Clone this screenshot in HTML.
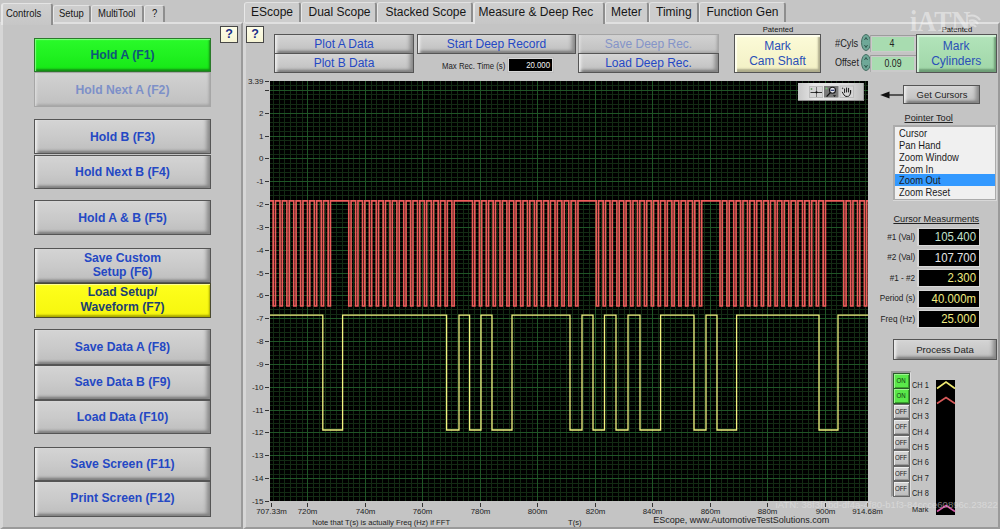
<!DOCTYPE html>
<html><head><meta charset="utf-8"><style>
html,body{margin:0;padding:0;}
body{width:1000px;height:529px;overflow:hidden;position:relative;background:#c5c5c5;font-family:"Liberation Sans",sans-serif;}
.a{position:absolute;box-sizing:border-box;}
.t{position:absolute;white-space:nowrap;}
.tab{position:absolute;box-sizing:border-box;background:#cfcfcf;border-left:1px solid #e8e8e8;border-top:1px solid #e2e2e2;border-right:2px solid #8e8e8e;border-radius:3px 3px 0 0;}
.panel{position:absolute;box-sizing:border-box;background:#c4c4c4;border-top:2px solid #e0e0e0;border-left:3px solid #d6d6d6;border-right:2px solid #9a9a9a;border-bottom:2px solid #9a9a9a;}
.help{position:absolute;box-sizing:border-box;background:linear-gradient(#fdfde8,#f6f4d4);border:1.5px solid #474747;}
.btn{position:absolute;box-sizing:border-box;border:1px solid #555;background:linear-gradient(#d4d4d4,#c9c9c9 55%,#bdbdbd);box-shadow:inset 4px 0 3px -2px #eeeeee,inset -5px 0 4px -2px #848484,inset 0 -4px 3px -2px #747474,inset 0 2px 2px -1px #e4e4e4;}
.mf{position:absolute;box-sizing:border-box;background:#000;border:1px solid #555;outline:2px solid #d4d4d4;}
.tg{position:absolute;box-sizing:border-box;border:1px solid #444;}
.on{background:#5ae84a;border-color:#2a5a2a;box-shadow:inset 1px 1px 0 #9cf58e,inset -1px -1px 0 #3aa02c;}
.off{background:linear-gradient(#d6d6d6,#bcbcbc);border-color:#666;box-shadow:inset 1px 1px 0 #eee,inset -1px -1px 0 #999;}

</style></head><body>
<div class="panel" style="left:0px;top:22px;width:243px;height:507px;"></div><div class="tab" style="left:1px;top:3px;width:52px;height:21.5px;z-index:1;border-left:2px solid #e6e6e6;border-top:1px solid #e4e4e4;background:linear-gradient(#d0d0d0,#c6c6c6);"></div><div class="t" style="top:7.12px;font-size:11px;line-height:13.75px;color:#161616;left:6.00px;transform:scaleX(0.86);transform-origin:0 50%;z-index:2;">Controls</div><div class="tab" style="left:53px;top:4.8px;width:38px;height:17.5px;background:#cdcdcd;"></div><div class="t" style="top:7.12px;font-size:11px;line-height:13.75px;color:#161616;left:58.50px;transform:scaleX(0.86);transform-origin:0 50%;z-index:2;">Setup</div><div class="tab" style="left:91px;top:4.8px;width:53px;height:17.5px;background:#cdcdcd;"></div><div class="t" style="top:7.12px;font-size:11px;line-height:13.75px;color:#161616;left:97.50px;transform:scaleX(0.86);transform-origin:0 50%;z-index:2;">MultiTool</div><div class="tab" style="left:144px;top:4.8px;width:21px;height:17.5px;background:#cdcdcd;"></div><div class="t" style="top:7.12px;font-size:11px;line-height:13.75px;color:#161616;left:151.50px;transform:scaleX(0.86);transform-origin:0 50%;z-index:2;">?</div><div class="help" style="left:220.3px;top:26.3px;width:17.3px;height:16.5px;"></div><div class="t" style="top:26.52px;font-size:12.5px;line-height:15.62px;color:#1a2f88;font-weight:700;left:-70.90px;width:600px;text-align:center;">?</div><div class="btn" style="left:34px;top:37.7px;width:177px;height:34.6px;background:linear-gradient(#2afa2a,#16e816);box-shadow:inset 1px 1px 1px #80ff80,inset -1px -2px 2px #139013;border-color:#2a7a2a;"></div><div class="t" style="top:48.09px;font-size:12.2px;line-height:15.25px;color:#0e5878;font-weight:700;left:-177.50px;width:600px;text-align:center;">Hold A (F1)</div><div class="btn" style="left:34px;top:72.2px;width:177px;height:34.9px;border-color:#a6a6a6;background:linear-gradient(#d2d2d2,#c8c8c8 55%,#c0c0c0);box-shadow:inset 3px 0 3px -2px #e4e4e4,inset -3px 0 3px -2px #a0a0a0,inset 0 -3px 3px -2px #9a9a9a;"></div><div class="t" style="top:82.59px;font-size:12.2px;line-height:15.25px;color:#7d90c8;font-weight:700;left:-177.50px;width:600px;text-align:center;">Hold Next A (F2)</div><div class="btn" style="left:34px;top:119.3px;width:177px;height:35.2px;"></div><div class="t" style="top:129.69px;font-size:12.2px;line-height:15.25px;color:#2448c4;font-weight:700;left:-177.50px;width:600px;text-align:center;">Hold B (F3)</div><div class="btn" style="left:34px;top:154.5px;width:177px;height:34.8px;"></div><div class="t" style="top:164.89px;font-size:12.2px;line-height:15.25px;color:#2448c4;font-weight:700;left:-177.50px;width:600px;text-align:center;">Hold Next B (F4)</div><div class="btn" style="left:34px;top:200.4px;width:177px;height:35.1px;"></div><div class="t" style="top:210.79px;font-size:12.2px;line-height:15.25px;color:#2448c4;font-weight:700;left:-177.50px;width:600px;text-align:center;">Hold A &amp; B (F5)</div><div class="btn" style="left:34px;top:247.7px;width:177px;height:35px;"></div><div class="t" style="top:250.59px;font-size:12.2px;line-height:15.25px;color:#2448c4;font-weight:700;left:-177.50px;width:600px;text-align:center;">Save Custom</div><div class="t" style="top:265.09px;font-size:12.2px;line-height:15.25px;color:#2448c4;font-weight:700;left:-177.50px;width:600px;text-align:center;">Setup (F6)</div><div class="btn" style="left:34px;top:282.6px;width:177px;height:35.4px;background:linear-gradient(#feff1c,#f6f60e);box-shadow:inset 1px 1px 1px #ffffa0,inset -1px -2px 2px #a8a800;border-color:#4a4a30;"></div><div class="t" style="top:285.49px;font-size:12.2px;line-height:15.25px;color:#1c3f72;font-weight:700;left:-177.50px;width:600px;text-align:center;">Load Setup/</div><div class="t" style="top:299.99px;font-size:12.2px;line-height:15.25px;color:#1c3f72;font-weight:700;left:-177.50px;width:600px;text-align:center;">Waveform (F7)</div><div class="btn" style="left:34px;top:329.4px;width:177px;height:35.2px;"></div><div class="t" style="top:339.79px;font-size:12.2px;line-height:15.25px;color:#2448c4;font-weight:700;left:-177.50px;width:600px;text-align:center;">Save Data A (F8)</div><div class="btn" style="left:34px;top:364.6px;width:177px;height:35.1px;"></div><div class="t" style="top:374.99px;font-size:12.2px;line-height:15.25px;color:#2448c4;font-weight:700;left:-177.50px;width:600px;text-align:center;">Save Data B (F9)</div><div class="btn" style="left:34px;top:399.7px;width:177px;height:34.3px;"></div><div class="t" style="top:410.09px;font-size:12.2px;line-height:15.25px;color:#2448c4;font-weight:700;left:-177.50px;width:600px;text-align:center;">Load Data (F10)</div><div class="btn" style="left:34px;top:446.6px;width:177px;height:34.5px;"></div><div class="t" style="top:456.99px;font-size:12.2px;line-height:15.25px;color:#2448c4;font-weight:700;left:-177.50px;width:600px;text-align:center;">Save Screen (F11)</div><div class="btn" style="left:34px;top:481.1px;width:177px;height:35.7px;"></div><div class="t" style="top:491.49px;font-size:12.2px;line-height:15.25px;color:#2448c4;font-weight:700;left:-177.50px;width:600px;text-align:center;">Print Screen (F12)</div><div class="panel" style="left:243px;top:22px;width:757px;height:507px;"></div><div class="tab" style="left:244px;top:2.4px;width:57px;height:19.900000000000002px;background:#cdcdcd;"></div><div class="t" style="top:4.82px;font-size:12px;line-height:15.0px;color:#161616;left:251.00px;z-index:2;">EScope</div><div class="tab" style="left:301px;top:2.4px;width:76px;height:19.900000000000002px;background:#cdcdcd;"></div><div class="t" style="top:4.82px;font-size:12px;line-height:15.0px;color:#161616;left:308.50px;z-index:2;">Dual Scope</div><div class="tab" style="left:377px;top:2.4px;width:96px;height:19.900000000000002px;background:#cdcdcd;"></div><div class="t" style="top:4.82px;font-size:12px;line-height:15.0px;color:#161616;left:385.50px;z-index:2;">Stacked Scope</div><div class="tab" style="left:473px;top:1.8px;width:132px;height:22.7px;z-index:1;border-left:2px solid #e6e6e6;border-top:1px solid #e4e4e4;background:linear-gradient(#d0d0d0,#c6c6c6);"></div><div class="t" style="top:4.82px;font-size:12px;line-height:15.0px;color:#161616;left:478.50px;z-index:2;">Measure &amp; Deep Rec</div><div class="tab" style="left:605px;top:2.4px;width:44px;height:19.900000000000002px;background:#cdcdcd;"></div><div class="t" style="top:4.82px;font-size:12px;line-height:15.0px;color:#161616;left:611.00px;z-index:2;">Meter</div><div class="tab" style="left:649px;top:2.4px;width:50px;height:19.900000000000002px;background:#cdcdcd;"></div><div class="t" style="top:4.82px;font-size:12px;line-height:15.0px;color:#161616;left:656.00px;z-index:2;">Timing</div><div class="tab" style="left:699px;top:2.4px;width:87px;height:19.900000000000002px;background:#cdcdcd;"></div><div class="t" style="top:4.82px;font-size:12px;line-height:15.0px;color:#161616;left:706.50px;z-index:2;">Function Gen</div><div class="help" style="left:246.3px;top:26.3px;width:17.3px;height:16.5px;"></div><div class="t" style="top:26.52px;font-size:12.5px;line-height:15.62px;color:#1a2f88;font-weight:700;left:-44.90px;width:600px;text-align:center;">?</div><div class="btn" style="left:274px;top:34px;width:140px;height:20px;"></div><div class="t" style="top:37.12px;font-size:12px;line-height:15.0px;color:#2448c4;left:44.00px;width:600px;text-align:center;">Plot A Data</div><div class="btn" style="left:274px;top:53px;width:140px;height:20px;"></div><div class="t" style="top:56.12px;font-size:12px;line-height:15.0px;color:#2448c4;left:44.00px;width:600px;text-align:center;">Plot B Data</div><div class="btn" style="left:417px;top:34px;width:159px;height:20px;"></div><div class="t" style="top:37.12px;font-size:12px;line-height:15.0px;color:#2448c4;left:196.50px;width:600px;text-align:center;">Start Deep Record</div><div class="t" style="top:60.66px;font-size:8.3px;line-height:10.38px;color:#222;left:442.00px;transform:scaleX(0.94);transform-origin:0 50%;">Max Rec. Time (s)</div><div class="a" style="left:507px;top:57px;width:47px;height:16px;background:#d8d8d8;border:1px solid #bdbdbd;"></div><div class="a" style="left:509px;top:59px;width:43px;height:12px;background:#000;"></div><div class="t" style="top:60.36px;font-size:8.3px;line-height:10.38px;color:#f4f4f4;left:-50.00px;width:600px;text-align:right;transform:scaleX(0.94);transform-origin:100% 50%;">20.000</div><div class="btn" style="left:578px;top:34px;width:141px;height:20px;border-color:#a6a6a6;background:linear-gradient(#d2d2d2,#c8c8c8 55%,#c0c0c0);box-shadow:inset 3px 0 3px -2px #e4e4e4,inset -3px 0 3px -2px #a0a0a0,inset 0 -3px 3px -2px #9a9a9a;"></div><div class="t" style="top:37.12px;font-size:12px;line-height:15.0px;color:#8494c8;left:348.50px;width:600px;text-align:center;">Save Deep Rec.</div><div class="btn" style="left:578px;top:53px;width:141px;height:20px;"></div><div class="t" style="top:56.12px;font-size:12px;line-height:15.0px;color:#2448c4;left:348.50px;width:600px;text-align:center;">Load Deep Rec.</div><div class="t" style="top:25.14px;font-size:8px;line-height:10.0px;color:#151515;left:477.50px;width:600px;text-align:center;transform:scaleX(0.95);transform-origin:50% 50%;">Patented</div><div class="btn" style="left:734px;top:34px;width:87px;height:39px;background:linear-gradient(#fcfbd8,#f2f0c4);box-shadow:inset 2px 2px 1px #ffffee,inset -2px -3px 2px #aeac8c;"></div><div class="t" style="top:38.52px;font-size:12px;line-height:15.0px;color:#2a50b8;left:477.50px;width:600px;text-align:center;">Mark</div><div class="t" style="top:53.92px;font-size:12px;line-height:15.0px;color:#2a50b8;left:477.50px;width:600px;text-align:center;">Cam Shaft</div><div class="t" style="top:37.51px;font-size:10.2px;line-height:12.75px;color:#222;left:835.00px;transform:scaleX(0.91);transform-origin:0 50%;">#Cyls</div><div class="t" style="top:57.21px;font-size:10.2px;line-height:12.75px;color:#222;left:835.00px;transform:scaleX(0.885);transform-origin:0 50%;">Offset</div><svg class="a" style="left:861px;top:34px" width="10" height="17"><ellipse cx="5" cy="8.5" rx="4.5" ry="8" fill="#6fa898" stroke="#456e62" stroke-width="1"/><path d="M3.5 6L5 3.5L6.5 6M3.5 11L5 13.5L6.5 11" stroke="#2a4a42" stroke-width="0.9" fill="none"/></svg><svg class="a" style="left:861px;top:54px" width="10" height="17"><ellipse cx="5" cy="8.5" rx="4.5" ry="8" fill="#6fa898" stroke="#456e62" stroke-width="1"/><path d="M3.5 6L5 3.5L6.5 6M3.5 11L5 13.5L6.5 11" stroke="#2a4a42" stroke-width="0.9" fill="none"/></svg><div class="a" style="left:870px;top:35px;width:46px;height:17px;background:#cacaca;border-top:1px solid #9c9c9c;border-left:1px solid #aaa;"></div><div class="a" style="left:872px;top:37px;width:42px;height:13.5px;background:#a8dcb0;"></div><div class="t" style="top:37.61px;font-size:10.2px;line-height:12.75px;color:#222;left:592.20px;width:600px;text-align:center;transform:scaleX(0.86);transform-origin:50% 50%;">4</div><div class="a" style="left:870px;top:55px;width:46px;height:17px;background:#cacaca;border-top:1px solid #9c9c9c;border-left:1px solid #aaa;"></div><div class="a" style="left:872px;top:56.5px;width:42px;height:13.5px;background:#a8dcb0;"></div><div class="t" style="top:58.21px;font-size:10.2px;line-height:12.75px;color:#222;left:592.50px;width:600px;text-align:center;transform:scaleX(0.86);transform-origin:50% 50%;">0.09</div><div class="t" style="top:24.94px;font-size:8px;line-height:10.0px;color:#151515;left:656.70px;width:600px;text-align:center;transform:scaleX(0.95);transform-origin:50% 50%;">Patented</div><div class="btn" style="left:916px;top:34px;width:80.5px;height:39px;background:linear-gradient(#b2e4ba,#a0d6a8);box-shadow:inset 2px 2px 1px #d2f2d8,inset -2px -3px 2px #6e9e76;"></div><div class="t" style="top:38.52px;font-size:12px;line-height:15.0px;color:#2a50b8;left:656.20px;width:600px;text-align:center;">Mark</div><div class="t" style="top:53.92px;font-size:12px;line-height:15.0px;color:#2a50b8;left:656.20px;width:600px;text-align:center;">Cylinders</div><svg width="598" height="420" viewBox="270.0 81.0 598.0 420.0" style="position:absolute;left:270px;top:81px;display:block"><rect x="270.0" y="81.0" width="598.0" height="420.0" fill="#000"/><path d="M273.5 81.0V501.0M279.5 81.0V501.0M284.5 81.0V501.0M290.5 81.0V501.0M296.5 81.0V501.0M302.5 81.0V501.0M313.5 81.0V501.0M319.5 81.0V501.0M325.5 81.0V501.0M330.5 81.0V501.0M336.5 81.0V501.0M342.5 81.0V501.0M348.5 81.0V501.0M353.5 81.0V501.0M359.5 81.0V501.0M371.5 81.0V501.0M376.5 81.0V501.0M382.5 81.0V501.0M388.5 81.0V501.0M394.5 81.0V501.0M399.5 81.0V501.0M405.5 81.0V501.0M411.5 81.0V501.0M417.5 81.0V501.0M428.5 81.0V501.0M434.5 81.0V501.0M440.5 81.0V501.0M445.5 81.0V501.0M451.5 81.0V501.0M457.5 81.0V501.0M463.5 81.0V501.0M468.5 81.0V501.0M474.5 81.0V501.0M486.5 81.0V501.0M491.5 81.0V501.0M497.5 81.0V501.0M503.5 81.0V501.0M509.5 81.0V501.0M514.5 81.0V501.0M520.5 81.0V501.0M526.5 81.0V501.0M532.5 81.0V501.0M543.5 81.0V501.0M549.5 81.0V501.0M555.5 81.0V501.0M560.5 81.0V501.0M566.5 81.0V501.0M572.5 81.0V501.0M578.5 81.0V501.0M583.5 81.0V501.0M589.5 81.0V501.0M601.5 81.0V501.0M606.5 81.0V501.0M612.5 81.0V501.0M618.5 81.0V501.0M624.5 81.0V501.0M629.5 81.0V501.0M635.5 81.0V501.0M641.5 81.0V501.0M647.5 81.0V501.0M658.5 81.0V501.0M664.5 81.0V501.0M670.5 81.0V501.0M675.5 81.0V501.0M681.5 81.0V501.0M687.5 81.0V501.0M693.5 81.0V501.0M698.5 81.0V501.0M704.5 81.0V501.0M716.5 81.0V501.0M721.5 81.0V501.0M727.5 81.0V501.0M733.5 81.0V501.0M739.5 81.0V501.0M744.5 81.0V501.0M750.5 81.0V501.0M756.5 81.0V501.0M762.5 81.0V501.0M773.5 81.0V501.0M779.5 81.0V501.0M785.5 81.0V501.0M790.5 81.0V501.0M796.5 81.0V501.0M802.5 81.0V501.0M808.5 81.0V501.0M813.5 81.0V501.0M819.5 81.0V501.0M831.5 81.0V501.0M836.5 81.0V501.0M842.5 81.0V501.0M848.5 81.0V501.0M854.5 81.0V501.0M859.5 81.0V501.0M865.5 81.0V501.0M270.0 496.5H868.0M270.0 492.5H868.0M270.0 487.5H868.0M270.0 483.5H868.0M270.0 474.5H868.0M270.0 469.5H868.0M270.0 464.5H868.0M270.0 460.5H868.0M270.0 451.5H868.0M270.0 446.5H868.0M270.0 442.5H868.0M270.0 437.5H868.0M270.0 428.5H868.0M270.0 423.5H868.0M270.0 419.5H868.0M270.0 414.5H868.0M270.0 405.5H868.0M270.0 401.5H868.0M270.0 396.5H868.0M270.0 391.5H868.0M270.0 382.5H868.0M270.0 378.5H868.0M270.0 373.5H868.0M270.0 369.5H868.0M270.0 359.5H868.0M270.0 355.5H868.0M270.0 350.5H868.0M270.0 346.5H868.0M270.0 337.5H868.0M270.0 332.5H868.0M270.0 327.5H868.0M270.0 323.5H868.0M270.0 314.5H868.0M270.0 309.5H868.0M270.0 305.5H868.0M270.0 300.5H868.0M270.0 291.5H868.0M270.0 286.5H868.0M270.0 282.5H868.0M270.0 277.5H868.0M270.0 268.5H868.0M270.0 263.5H868.0M270.0 259.5H868.0M270.0 254.5H868.0M270.0 245.5H868.0M270.0 241.5H868.0M270.0 236.5H868.0M270.0 232.5H868.0M270.0 222.5H868.0M270.0 218.5H868.0M270.0 213.5H868.0M270.0 209.5H868.0M270.0 200.5H868.0M270.0 195.5H868.0M270.0 190.5H868.0M270.0 186.5H868.0M270.0 177.5H868.0M270.0 172.5H868.0M270.0 168.5H868.0M270.0 163.5H868.0M270.0 154.5H868.0M270.0 149.5H868.0M270.0 145.5H868.0M270.0 140.5H868.0M270.0 131.5H868.0M270.0 126.5H868.0M270.0 122.5H868.0M270.0 117.5H868.0M270.0 108.5H868.0M270.0 104.5H868.0M270.0 99.5H868.0M270.0 94.5H868.0M270.0 85.5H868.0" stroke="#132b14" stroke-width="1" fill="none"/><path d="M307.5 81.0V501.0M365.5 81.0V501.0M422.5 81.0V501.0M480.5 81.0V501.0M537.5 81.0V501.0M595.5 81.0V501.0M652.5 81.0V501.0M710.5 81.0V501.0M767.5 81.0V501.0M825.5 81.0V501.0M270.0 501.5H868.0M270.0 478.5H868.0M270.0 455.5H868.0M270.0 432.5H868.0M270.0 410.5H868.0M270.0 387.5H868.0M270.0 364.5H868.0M270.0 341.5H868.0M270.0 318.5H868.0M270.0 295.5H868.0M270.0 273.5H868.0M270.0 250.5H868.0M270.0 227.5H868.0M270.0 204.5H868.0M270.0 181.5H868.0M270.0 158.5H868.0M270.0 136.5H868.0M270.0 113.5H868.0M270.0 90.5H868.0" stroke="#1f5526" stroke-width="1" fill="none"/><path d="M270.0 200.9H273.15V306.0H275.45V200.9H280.03V306.0H282.32V200.9H286.90V306.0H289.20V200.9H293.78V306.0H296.07V200.9H300.65V306.0H302.95V200.9H307.53V306.0H309.82V200.9H314.40V306.0H316.70V200.9H321.28V306.0H323.57V200.9H328.15V306.0H330.45V200.9H348.78V306.0H351.07V200.9H355.65V306.0H357.95V200.9H362.53V306.0H364.82V200.9H369.40V306.0H371.70V200.9H376.28V306.0H378.57V200.9H383.15V306.0H385.45V200.9H390.03V306.0H392.32V200.9H396.90V306.0H399.20V200.9H403.78V306.0H406.07V200.9H410.65V306.0H412.95V200.9H417.53V306.0H419.82V200.9H424.40V306.0H426.70V200.9H431.28V306.0H433.57V200.9H438.15V306.0H440.45V200.9H445.03V306.0H447.32V200.9H451.90V306.0H454.20V200.9H472.53V306.0H474.82V200.9H479.40V306.0H481.70V200.9H486.28V306.0H488.57V200.9H493.15V306.0H495.45V200.9H500.03V306.0H502.32V200.9H506.90V306.0H509.20V200.9H513.77V306.0H516.07V200.9H520.65V306.0H522.95V200.9H527.52V306.0H529.82V200.9H534.40V306.0H536.70V200.9H541.27V306.0H543.57V200.9H548.15V306.0H550.45V200.9H555.02V306.0H557.32V200.9H561.90V306.0H564.20V200.9H568.77V306.0H571.07V200.9H575.65V306.0H577.95V200.9H596.27V306.0H598.57V200.9H603.15V306.0H605.45V200.9H610.02V306.0H612.32V200.9H616.90V306.0H619.20V200.9H623.77V306.0H626.07V200.9H630.65V306.0H632.95V200.9H637.52V306.0H639.82V200.9H644.40V306.0H646.70V200.9H651.27V306.0H653.57V200.9H658.15V306.0H660.45V200.9H665.02V306.0H667.32V200.9H671.90V306.0H674.20V200.9H678.77V306.0H681.07V200.9H685.65V306.0H687.95V200.9H692.52V306.0H694.82V200.9H699.40V306.0H701.70V200.9H720.02V306.0H722.32V200.9H726.90V306.0H729.20V200.9H733.77V306.0H736.07V200.9H740.65V306.0H742.95V200.9H747.52V306.0H749.82V200.9H754.40V306.0H756.70V200.9H761.27V306.0H763.57V200.9H768.15V306.0H770.45V200.9H775.02V306.0H777.32V200.9H781.90V306.0H784.20V200.9H788.77V306.0H791.07V200.9H795.65V306.0H797.95V200.9H802.52V306.0H804.82V200.9H809.40V306.0H811.70V200.9H816.27V306.0H818.57V200.9H823.15V306.0H825.45V200.9H843.77V306.0H846.07V200.9H850.65V306.0H852.95V200.9H857.52V306.0H859.82V200.9H864.40V306.0H866.70V200.9H868.0" stroke="#ec5c5a" stroke-width="1.65" fill="none"/><path d="M270.0 315.1H322.8V430.0H342.6V315.1H446.6V430.0H459V315.1H469.6V430.0H481V315.1H492V430.0H512V315.1H570V430.0H582V315.1H593V430.0H604.5V315.1H616V430.0H628V315.1H640V430.0H660.6V315.1H694V430.0H706V315.1H717V430.0H736.6V315.1H819V430.0H838V315.1H868.0" stroke="#f2f280" stroke-width="1.3" fill="none"/></svg><div class="a" style="left:265px;top:90px;width:4px;height:1px;background:#333"></div><div class="a" style="left:265px;top:113px;width:4px;height:1px;background:#333"></div><div class="t" style="top:109.44px;font-size:8px;line-height:10px;color:#222;left:163.50px;width:100px;text-align:right;">2</div><div class="a" style="left:265px;top:136px;width:4px;height:1px;background:#333"></div><div class="t" style="top:132.44px;font-size:8px;line-height:10px;color:#222;left:163.50px;width:100px;text-align:right;">1</div><div class="a" style="left:265px;top:158px;width:4px;height:1px;background:#333"></div><div class="t" style="top:154.44px;font-size:8px;line-height:10px;color:#222;left:163.50px;width:100px;text-align:right;">0</div><div class="a" style="left:265px;top:181px;width:4px;height:1px;background:#333"></div><div class="t" style="top:177.44px;font-size:8px;line-height:10px;color:#222;left:163.50px;width:100px;text-align:right;">-1</div><div class="a" style="left:265px;top:204px;width:4px;height:1px;background:#333"></div><div class="t" style="top:200.44px;font-size:8px;line-height:10px;color:#222;left:163.50px;width:100px;text-align:right;">-2</div><div class="a" style="left:265px;top:227px;width:4px;height:1px;background:#333"></div><div class="t" style="top:223.44px;font-size:8px;line-height:10px;color:#222;left:163.50px;width:100px;text-align:right;">-3</div><div class="a" style="left:265px;top:250px;width:4px;height:1px;background:#333"></div><div class="t" style="top:246.44px;font-size:8px;line-height:10px;color:#222;left:163.50px;width:100px;text-align:right;">-4</div><div class="a" style="left:265px;top:273px;width:4px;height:1px;background:#333"></div><div class="t" style="top:269.44px;font-size:8px;line-height:10px;color:#222;left:163.50px;width:100px;text-align:right;">-5</div><div class="a" style="left:265px;top:295px;width:4px;height:1px;background:#333"></div><div class="t" style="top:291.44px;font-size:8px;line-height:10px;color:#222;left:163.50px;width:100px;text-align:right;">-6</div><div class="a" style="left:265px;top:318px;width:4px;height:1px;background:#333"></div><div class="t" style="top:314.44px;font-size:8px;line-height:10px;color:#222;left:163.50px;width:100px;text-align:right;">-7</div><div class="a" style="left:265px;top:341px;width:4px;height:1px;background:#333"></div><div class="t" style="top:337.44px;font-size:8px;line-height:10px;color:#222;left:163.50px;width:100px;text-align:right;">-8</div><div class="a" style="left:265px;top:364px;width:4px;height:1px;background:#333"></div><div class="t" style="top:360.44px;font-size:8px;line-height:10px;color:#222;left:163.50px;width:100px;text-align:right;">-9</div><div class="a" style="left:265px;top:387px;width:4px;height:1px;background:#333"></div><div class="t" style="top:383.44px;font-size:8px;line-height:10px;color:#222;left:163.50px;width:100px;text-align:right;">-10</div><div class="a" style="left:265px;top:410px;width:4px;height:1px;background:#333"></div><div class="t" style="top:406.44px;font-size:8px;line-height:10px;color:#222;left:163.50px;width:100px;text-align:right;">-11</div><div class="a" style="left:265px;top:432px;width:4px;height:1px;background:#333"></div><div class="t" style="top:428.44px;font-size:8px;line-height:10px;color:#222;left:163.50px;width:100px;text-align:right;">-12</div><div class="a" style="left:265px;top:455px;width:4px;height:1px;background:#333"></div><div class="t" style="top:451.44px;font-size:8px;line-height:10px;color:#222;left:163.50px;width:100px;text-align:right;">-13</div><div class="a" style="left:265px;top:478px;width:4px;height:1px;background:#333"></div><div class="t" style="top:474.44px;font-size:8px;line-height:10px;color:#222;left:163.50px;width:100px;text-align:right;">-14</div><div class="a" style="left:265px;top:501px;width:4px;height:1px;background:#333"></div><div class="t" style="top:497.44px;font-size:8px;line-height:10px;color:#222;left:163.50px;width:100px;text-align:right;">-15</div><div class="a" style="left:265px;top:81px;width:4px;height:1px;background:#333"></div><div class="t" style="top:77.44px;font-size:8px;line-height:10px;color:#222;left:163.50px;width:100px;text-align:right;">3.39</div><div class="a" style="left:271px;top:503px;width:1px;height:4px;background:#333"></div><div class="t" style="top:507.44px;font-size:7.9px;line-height:10px;color:#222;left:221.50px;width:100px;text-align:center;">707.33m</div><div class="a" style="left:307px;top:503px;width:1px;height:4px;background:#333"></div><div class="t" style="top:507.44px;font-size:7.9px;line-height:10px;color:#222;left:257.50px;width:100px;text-align:center;">720m</div><div class="a" style="left:365px;top:503px;width:1px;height:4px;background:#333"></div><div class="t" style="top:507.44px;font-size:7.9px;line-height:10px;color:#222;left:315.50px;width:100px;text-align:center;">740m</div><div class="a" style="left:422px;top:503px;width:1px;height:4px;background:#333"></div><div class="t" style="top:507.44px;font-size:7.9px;line-height:10px;color:#222;left:372.50px;width:100px;text-align:center;">760m</div><div class="a" style="left:480px;top:503px;width:1px;height:4px;background:#333"></div><div class="t" style="top:507.44px;font-size:7.9px;line-height:10px;color:#222;left:430.50px;width:100px;text-align:center;">780m</div><div class="a" style="left:537px;top:503px;width:1px;height:4px;background:#333"></div><div class="t" style="top:507.44px;font-size:7.9px;line-height:10px;color:#222;left:487.50px;width:100px;text-align:center;">800m</div><div class="a" style="left:595px;top:503px;width:1px;height:4px;background:#333"></div><div class="t" style="top:507.44px;font-size:7.9px;line-height:10px;color:#222;left:545.50px;width:100px;text-align:center;">820m</div><div class="a" style="left:652px;top:503px;width:1px;height:4px;background:#333"></div><div class="t" style="top:507.44px;font-size:7.9px;line-height:10px;color:#222;left:602.50px;width:100px;text-align:center;">840m</div><div class="a" style="left:710px;top:503px;width:1px;height:4px;background:#333"></div><div class="t" style="top:507.44px;font-size:7.9px;line-height:10px;color:#222;left:660.50px;width:100px;text-align:center;">860m</div><div class="a" style="left:767px;top:503px;width:1px;height:4px;background:#333"></div><div class="t" style="top:507.44px;font-size:7.9px;line-height:10px;color:#222;left:717.50px;width:100px;text-align:center;">880m</div><div class="a" style="left:825px;top:503px;width:1px;height:4px;background:#333"></div><div class="t" style="top:507.44px;font-size:7.9px;line-height:10px;color:#222;left:775.50px;width:100px;text-align:center;">900m</div><div class="a" style="left:867px;top:503px;width:1px;height:4px;background:#333"></div><div class="t" style="top:507.44px;font-size:7.9px;line-height:10px;color:#222;left:817.50px;width:100px;text-align:center;">914.68m</div><div class="t" style="top:517.69px;font-size:7.6px;line-height:9.5px;color:#222;left:312.20px;">Note that T(s) is actually Freq (Hz) if FFT</div><div class="t" style="top:518.19px;font-size:7.6px;line-height:9.5px;color:#222;left:274.80px;width:600px;text-align:center;">T(s)</div><div class="t" style="top:514.84px;font-size:9.0px;line-height:11.25px;color:#222;left:653.20px;">EScope, www.AutomotiveTestSolutions.com</div><div class="a" style="left:798px;top:83px;width:66px;height:18px;background:linear-gradient(90deg,#c8c8c8,#e6e6e6 25%,#dcdcdc 75%,#bdbdbd);border-bottom:1px solid #8a8a8a;border-right:1px solid #9a9a9a;"></div><svg class="a" style="left:798px;top:83px" width="66" height="18">
<rect x="11.5" y="3.5" width="13" height="11" fill="#d4d4d4" stroke="#bcbcbc" stroke-width="1"/>
<path d="M18.5 4V14" stroke="#777" stroke-width="1"/><path d="M12.5 9.5H24" stroke="#222" stroke-width="0.9"/><circle cx="18.5" cy="9.3" r="1.1" fill="#111"/><circle cx="13.5" cy="6" r="0.9" fill="#6a9a6a"/>
<rect x="26" y="3" width="14.5" height="11.5" fill="#787878"/>
<circle cx="34.5" cy="7.3" r="3" fill="#e8e8f0" stroke="#181818" stroke-width="1.1"/><path d="M32.6 7.3H36.4" stroke="#22306a" stroke-width="1.2"/><path d="M32.3 9.6L28.6 13.6" stroke="#111" stroke-width="1.3"/><path d="M35 12.3H38L36.5 14Z" fill="#111"/><circle cx="28.5" cy="5.5" r="1.1" fill="#7ac07a"/>
<rect x="42" y="3" width="13.5" height="11.5" fill="#d6d6d6" stroke="#bcbcbc" stroke-width="1"/>
<path d="M46.6 9.5V6M48.6 9V5M50.6 9V5.3M52.6 10V7.2C52.6 11 51.8 13.4 49.6 13.4H48C46.8 13.4 45.6 11.5 44.4 9.2" stroke="#151515" stroke-width="1" fill="none" stroke-linecap="round"/><circle cx="44.6" cy="5.4" r="0.8" fill="#555"/>
</svg><div class="a" style="left:888px;top:94.4px;width:15px;height:1.3px;background:#555;"></div><svg class="a" style="left:880px;top:91px" width="10" height="8"><path d="M0.2 4L9.5 0.6V7.4Z" fill="#111"/></svg><div class="btn" style="left:903px;top:85px;width:77px;height:19px;"></div><div class="t" style="top:89.39px;font-size:9.9px;line-height:12.38px;color:#1e1e1e;left:641.50px;width:600px;text-align:center;transform:scaleX(0.955);transform-origin:50% 50%;">Get Cursors</div><div class="t" style="top:113.22px;font-size:9.2px;line-height:11.5px;color:#222;left:904.50px;text-decoration:underline;">Pointer Tool</div><div class="a" style="left:892.5px;top:124.5px;width:104px;height:76px;background:#ababab;border-right:1px solid #d8d8d8;border-bottom:1px solid #d8d8d8;"></div><div class="a" style="left:894.6px;top:126.8px;width:100px;height:72.4px;background:#f0f0f0;"></div><div class="a" style="left:894.6px;top:174.2px;width:100px;height:11.4px;background:#3399ff;"></div><div class="t" style="top:128.25px;font-size:10.3px;line-height:12.88px;color:#1a1a1a;left:898.60px;transform:scaleX(0.91);transform-origin:0 50%;">Cursor</div><div class="t" style="top:140.00px;font-size:10.3px;line-height:12.88px;color:#1a1a1a;left:898.60px;transform:scaleX(0.91);transform-origin:0 50%;">Pan Hand</div><div class="t" style="top:151.75px;font-size:10.3px;line-height:12.88px;color:#1a1a1a;left:898.60px;transform:scaleX(0.91);transform-origin:0 50%;">Zoom Window</div><div class="t" style="top:163.50px;font-size:10.3px;line-height:12.88px;color:#1a1a1a;left:898.60px;transform:scaleX(0.91);transform-origin:0 50%;">Zoom In</div><div class="t" style="top:175.25px;font-size:10.3px;line-height:12.88px;color:#1a1a1a;left:898.60px;transform:scaleX(0.91);transform-origin:0 50%;">Zoom Out</div><div class="t" style="top:187.00px;font-size:10.3px;line-height:12.88px;color:#1a1a1a;left:898.60px;transform:scaleX(0.91);transform-origin:0 50%;">Zoom Reset</div><div class="t" style="top:214.42px;font-size:9.2px;line-height:11.5px;color:#222;left:893.40px;text-decoration:underline;">Cursor Measurments</div><div class="t" style="top:232.52px;font-size:8.2px;line-height:10.25px;color:#222;left:315.20px;width:600px;text-align:right;">#1 (Val)</div><div class="a" style="left:916px;top:227px;width:65px;height:20px;background:#d6d6d6;border:1px solid #c4c4c4;"></div><div class="a" style="left:918.5px;top:229px;width:60.2px;height:16px;background:#000;"></div><div class="t" style="top:229.97px;font-size:12.4px;line-height:15.5px;color:#c4e0cc;left:376.00px;width:600px;text-align:right;transform:scaleX(0.92);transform-origin:100% 50%;">105.400</div><div class="t" style="top:253.12px;font-size:8.2px;line-height:10.25px;color:#222;left:315.20px;width:600px;text-align:right;">#2 (Val)</div><div class="a" style="left:916px;top:247.6px;width:65px;height:20px;background:#d6d6d6;border:1px solid #c4c4c4;"></div><div class="a" style="left:918.5px;top:249.6px;width:60.2px;height:16px;background:#000;"></div><div class="t" style="top:250.57px;font-size:12.4px;line-height:15.5px;color:#e6e6e6;left:376.00px;width:600px;text-align:right;transform:scaleX(0.92);transform-origin:100% 50%;">107.700</div><div class="t" style="top:273.72px;font-size:8.2px;line-height:10.25px;color:#222;left:315.20px;width:600px;text-align:right;">#1 - #2</div><div class="a" style="left:916px;top:268.2px;width:65px;height:20px;background:#d6d6d6;border:1px solid #c4c4c4;"></div><div class="a" style="left:918.5px;top:270.2px;width:60.2px;height:16px;background:#000;"></div><div class="t" style="top:271.17px;font-size:12.4px;line-height:15.5px;color:#f0ec80;left:376.00px;width:600px;text-align:right;transform:scaleX(0.92);transform-origin:100% 50%;">2.300</div><div class="t" style="top:294.32px;font-size:8.2px;line-height:10.25px;color:#222;left:315.20px;width:600px;text-align:right;">Period (s)</div><div class="a" style="left:916px;top:288.8px;width:65px;height:20px;background:#d6d6d6;border:1px solid #c4c4c4;"></div><div class="a" style="left:918.5px;top:290.8px;width:60.2px;height:16px;background:#000;"></div><div class="t" style="top:291.77px;font-size:12.4px;line-height:15.5px;color:#f0ec80;left:376.00px;width:600px;text-align:right;transform:scaleX(0.92);transform-origin:100% 50%;">40.000m</div><div class="t" style="top:314.92px;font-size:8.2px;line-height:10.25px;color:#222;left:315.20px;width:600px;text-align:right;">Freq (Hz)</div><div class="a" style="left:916px;top:309.4px;width:65px;height:20px;background:#d6d6d6;border:1px solid #c4c4c4;"></div><div class="a" style="left:918.5px;top:311.4px;width:60.2px;height:16px;background:#000;"></div><div class="t" style="top:312.37px;font-size:12.4px;line-height:15.5px;color:#f0ec80;left:376.00px;width:600px;text-align:right;transform:scaleX(0.92);transform-origin:100% 50%;">25.000</div><div class="btn" style="left:893px;top:339px;width:104px;height:21px;"></div><div class="t" style="top:344.47px;font-size:9.6px;line-height:12.0px;color:#222;left:645.00px;width:600px;text-align:center;">Process Data</div><div class="a" style="left:891px;top:371px;width:20px;height:126px;background:#b8b8b8;border:2px solid #999;border-right:1px solid #dedede;border-bottom:1px solid #dedede;"></div><div class="tg on" style="left:893px;top:373px;width:16.5px;height:15.5px;"></div><div class="t" style="top:376.33px;font-size:7.2px;line-height:9.0px;color:#0e3a10;left:601.20px;width:600px;text-align:center;transform:scaleX(0.85);transform-origin:50% 50%;">ON</div><div class="tg on" style="left:893px;top:388px;width:16.5px;height:15.5px;"></div><div class="t" style="top:391.33px;font-size:7.2px;line-height:9.0px;color:#0e3a10;left:601.20px;width:600px;text-align:center;transform:scaleX(0.85);transform-origin:50% 50%;">ON</div><div class="tg off" style="left:893px;top:403.5px;width:16.5px;height:15.5px;"></div><div class="t" style="top:406.83px;font-size:7.2px;line-height:9.0px;color:#222;left:601.20px;width:600px;text-align:center;transform:scaleX(0.85);transform-origin:50% 50%;">OFF</div><div class="tg off" style="left:893px;top:419px;width:16.5px;height:15.5px;"></div><div class="t" style="top:422.33px;font-size:7.2px;line-height:9.0px;color:#222;left:601.20px;width:600px;text-align:center;transform:scaleX(0.85);transform-origin:50% 50%;">OFF</div><div class="tg off" style="left:893px;top:434.5px;width:16.5px;height:15.5px;"></div><div class="t" style="top:437.83px;font-size:7.2px;line-height:9.0px;color:#222;left:601.20px;width:600px;text-align:center;transform:scaleX(0.85);transform-origin:50% 50%;">OFF</div><div class="tg off" style="left:893px;top:450px;width:16.5px;height:15.5px;"></div><div class="t" style="top:453.33px;font-size:7.2px;line-height:9.0px;color:#222;left:601.20px;width:600px;text-align:center;transform:scaleX(0.85);transform-origin:50% 50%;">OFF</div><div class="tg off" style="left:893px;top:465.5px;width:16.5px;height:15.5px;"></div><div class="t" style="top:468.83px;font-size:7.2px;line-height:9.0px;color:#222;left:601.20px;width:600px;text-align:center;transform:scaleX(0.85);transform-origin:50% 50%;">OFF</div><div class="tg off" style="left:893px;top:481px;width:16.5px;height:15.5px;"></div><div class="t" style="top:484.33px;font-size:7.2px;line-height:9.0px;color:#222;left:601.20px;width:600px;text-align:center;transform:scaleX(0.85);transform-origin:50% 50%;">OFF</div><div class="t" style="top:381.22px;font-size:8.2px;line-height:10.25px;color:#1a1a1a;left:912.00px;transform:scaleX(0.9);transform-origin:0 50%;">CH 1</div><div class="t" style="top:396.82px;font-size:8.2px;line-height:10.25px;color:#1a1a1a;left:912.00px;transform:scaleX(0.9);transform-origin:0 50%;">CH 2</div><div class="t" style="top:412.42px;font-size:8.2px;line-height:10.25px;color:#1a1a1a;left:912.00px;transform:scaleX(0.9);transform-origin:0 50%;">CH 3</div><div class="t" style="top:427.82px;font-size:8.2px;line-height:10.25px;color:#1a1a1a;left:912.00px;transform:scaleX(0.9);transform-origin:0 50%;">CH 4</div><div class="t" style="top:442.82px;font-size:8.2px;line-height:10.25px;color:#1a1a1a;left:912.00px;transform:scaleX(0.9);transform-origin:0 50%;">CH 5</div><div class="t" style="top:458.32px;font-size:8.2px;line-height:10.25px;color:#1a1a1a;left:912.00px;transform:scaleX(0.9);transform-origin:0 50%;">CH 6</div><div class="t" style="top:473.82px;font-size:8.2px;line-height:10.25px;color:#1a1a1a;left:912.00px;transform:scaleX(0.9);transform-origin:0 50%;">CH 7</div><div class="t" style="top:488.82px;font-size:8.2px;line-height:10.25px;color:#1a1a1a;left:912.00px;transform:scaleX(0.9);transform-origin:0 50%;">CH 8</div><div class="t" style="top:504.94px;font-size:8.0px;line-height:10.0px;color:#1a1a1a;left:912.00px;transform:scaleX(0.92);transform-origin:0 50%;">Mark</div><div class="a" style="left:936px;top:380px;width:19.3px;height:134.7px;background:#000;"></div><svg class="a" style="left:936px;top:379px;" width="20" height="136"><path d="M1 9.5L10 3L19 9.5" stroke="#eee870" stroke-width="1.6" fill="none"/><path d="M1 24.5L10 18.5L19 24.5" stroke="#d85a5a" stroke-width="1.6" fill="none"/><path d="M1 132.5L10 126.5L19 132.5" stroke="#d25aa8" stroke-width="1.6" fill="none"/></svg><div class="t" style="left:910px;top:5px;font-family:'Liberation Serif',serif;font-weight:700;font-size:29px;line-height:32px;color:rgba(255,255,255,0.42);transform:scaleX(0.9);transform-origin:0 0;">iATN</div><svg class="a" style="left:966px;top:10px" width="22" height="20"><path d="M2 6Q10 4 14 10M3 11Q9 9 12 14M4 15Q8 14 10 17" stroke="rgba(255,255,255,0.4)" stroke-width="2.2" fill="none"/></svg><div class="t" style="top:498.90px;font-size:9.55px;line-height:11.94px;color:rgba(235,235,235,0.5);left:775.60px;">iATN: 38f3f0bd-df4a-4f80-b1f3-84ccce60896c.23822</div>
</body></html>
